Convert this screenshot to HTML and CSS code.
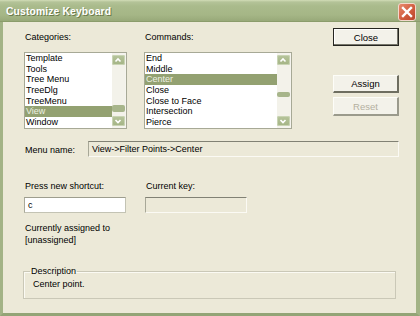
FILE: index.html
```html
<!DOCTYPE html>
<html>
<head>
<meta charset="utf-8">
<link rel="stylesheet" href="styles.css">
</head>
<body>
<div class="window">
  <div class="titlebar">
    <span class="title">Customize Keyboard</span>
    <span class="xbtn"><svg width="16" height="16" viewBox="0 0 16 16"><path d="M4 4 L12 12 M12 4 L4 12" stroke="#fff" stroke-width="2.4" stroke-linecap="square"/></svg></span>
  </div>
  <div class="frame">
    <div class="top">
      <div class="col col-cat">
        <div class="lbl">Categories:</div>
        <div class="listbox">
          <div class="items">
            <div class="item">Template</div>
            <div class="item">Tools</div>
            <div class="item">Tree Menu</div>
            <div class="item">TreeDlg</div>
            <div class="item">TreeMenu</div>
            <div class="item sel">View</div>
            <div class="item">Window</div>
          </div>
          <div class="sb">
            <div class="arr"><svg width="12" height="10" viewBox="0 0 12 10"><path d="M3.5 6.5 L6 4 L8.5 6.5" fill="none" stroke="#fff" stroke-width="1.6"/></svg></div>
            <div class="track"><div class="thumb thumb-cat"></div></div>
            <div class="arr"><svg width="12" height="10" viewBox="0 0 12 10"><path d="M3.5 4 L6 6.5 L8.5 4" fill="none" stroke="#fff" stroke-width="1.6"/></svg></div>
          </div>
        </div>
      </div>
      <div class="col col-cmd">
        <div class="lbl">Commands:</div>
        <div class="listbox">
          <div class="items">
            <div class="item">End</div>
            <div class="item">Middle</div>
            <div class="item sel">Center</div>
            <div class="item">Close</div>
            <div class="item">Close to Face</div>
            <div class="item">Intersection</div>
            <div class="item">Pierce</div>
          </div>
          <div class="sb">
            <div class="arr"><svg width="12" height="10" viewBox="0 0 12 10"><path d="M3.5 6.5 L6 4 L8.5 6.5" fill="none" stroke="#fff" stroke-width="1.6"/></svg></div>
            <div class="track"><div class="thumb thumb-cmd"></div></div>
            <div class="arr"><svg width="12" height="10" viewBox="0 0 12 10"><path d="M3.5 4 L6 6.5 L8.5 4" fill="none" stroke="#fff" stroke-width="1.6"/></svg></div>
          </div>
        </div>
      </div>
      <div class="buttons">
        <div class="btn btn-default">Close</div>
        <div class="btn btn-assign">Assign</div>
        <div class="btn btn-disabled">Reset</div>
      </div>
    </div>
    <div class="menu-row">
      <div class="menu-lbl">Menu name:</div>
      <div class="field field-menu">View-&gt;Filter Points-&gt;Center</div>
    </div>
    <div class="shortcut-row">
      <div class="sc-col sc-new">
        <div class="lbl2">Press new shortcut:</div>
        <div class="input">c</div>
      </div>
      <div class="sc-col">
        <div class="lbl2">Current key:</div>
        <div class="field field-key"></div>
      </div>
    </div>
    <div class="assigned">
      <div>Currently assigned to</div>
      <div>[unassigned]</div>
    </div>
    <fieldset class="group">
      <legend>Description</legend>
      <div class="desc">Center point.</div>
    </fieldset>
  </div>
</div>
</body>
</html>
```
FILE: styles.css
```css
html, body {
  margin: 0;
  padding: 0;
  background: #ece9d8;
}
body {
  font-family: "Liberation Sans", Arial, sans-serif;
  font-size: 9px;
  color: #000;
}
.window {
  width: 420px;
  height: 316px;
  display: flex;
  flex-direction: column;
  overflow: hidden;
}
.titlebar {
  height: 21px;
  flex: none;
  display: flex;
  align-items: center;
  justify-content: space-between;
  padding: 0 4px 0 6px;
  background: linear-gradient(#d2ddb7 0, #b4c398 2px, #aabb8c 6px, #a5b686 15px, #98a979 21px);
  border-bottom: 1px solid #8b9c6b;
}
.title {
  color: #fff;
  font-weight: bold;
  font-size: 10.4px;
  letter-spacing: 0.1px;
  text-shadow: 1px 1px 0 #6b7b4d;
  padding-top: 1px;
}
.xbtn {
  width: 18px;
  height: 18px;
  box-sizing: border-box;
  border: 1px solid #f3d8cc;
  border-radius: 3px;
  background: linear-gradient(135deg, #e88a6c, #cf5a3c 60%, #b9452c);
  display: flex;
  align-items: center;
  justify-content: center;
  margin-top: 2px;
}
.frame {
  flex: 1;
  background: #ece9d8;
  border-left: 3px solid #a3b386;
  border-right: 4px solid #a3b386;
  border-bottom: 3px solid #93a476;
  padding: 6px 17px 0 21px;
}
.top {
  display: flex;
  align-items: flex-start;
}
.col-cat { width: 103px; }
.col-cmd { width: 148px; margin-left: 17px; }
.lbl {
  height: 13px;
  line-height: 13px;
  margin-top: 3px;
  margin-bottom: 8px;
  padding-left: 1px;
}
.listbox {
  height: 77px;
  box-sizing: border-box;
  border: 1px solid #a7a996;
  background: #fff;
  display: flex;
}
.items {
  flex: 1;
  min-width: 0;
}
.item {
  height: 10.7px;
  line-height: 10.7px;
  padding-left: 1px;
  white-space: nowrap;
}
.item.sel {
  background: #93a171;
  color: #eef1e2;
}
.sb {
  width: 13px;
  padding: 2px 1px 2px 0;
  display: flex;
  flex-direction: column;
  background: #f5f4ee;
}
.arr {
  height: 10px;
  border-radius: 2px;
  background: linear-gradient(#b7c59c, #a3b384);
  box-shadow: inset 0 0 0 1px #c9d4b4;
}
.arr svg { display: block; }
.track {
  flex: 1;
  background: #f3f2ea;
}
.thumb {
  height: 6px;
  border-radius: 2px;
  background: #a7b58b;
}
.thumb-cat { margin-top: 40px; height: 7px; }
.thumb-cmd { margin-top: 27px; height: 5px; }
.buttons {
  margin-left: auto;
  width: 66px;
  display: flex;
  flex-direction: column;
}
.btn {
  height: 18px;
  box-sizing: border-box;
  display: flex;
  align-items: center;
  justify-content: center;
  background: #f3f2ea;
  border-top: 1px solid #fdfdf8;
  border-left: 1px solid #fdfdf8;
  border-right: 2px solid #6e6e60;
  border-bottom: 2px solid #6e6e60;
  font-size: 9.5px;
}
.btn-default {
  border: 1px solid #252520;
  box-shadow: inset -1px -1px 0 #76766a, inset 1px 1px 0 #fff;
}
.btn-assign { margin-top: 29px; }
.btn-disabled {
  margin-top: 4px;
  height: 19px;
  color: #b3b09f;
  border-right-color: #9a9a8c;
  border-bottom-color: #9a9a8c;
}
.menu-row {
  display: flex;
  align-items: center;
  margin-top: 12px;
}
.menu-lbl {
  width: 64px;
  padding-left: 1px;
  box-sizing: border-box;
  line-height: 13px;
  padding-top: 2px;
}
.field {
  box-sizing: border-box;
  height: 16px;
  line-height: 14px;
  padding-left: 3px;
  border-top: 1px solid #818174;
  border-left: 1px solid #a8a898;
  border-right: 1px solid #fbfaf4;
  border-bottom: 1px solid #fbfaf4;
  background: #ece9d8;
}
.field-menu { width: 311px; }
.field-key { width: 102px; }
.shortcut-row {
  display: flex;
  margin-top: 23px;
}
.sc-new { width: 121px; }
.lbl2 {
  line-height: 13px;
  height: 13px;
  margin-bottom: 4px;
  padding-left: 1px;
}
.input {
  width: 102px;
  height: 16px;
  box-sizing: border-box;
  line-height: 14px;
  padding-left: 3px;
  background: #fff;
  border: 1px solid #c3c3b4;
  border-top-color: #9d9d8e;
  border-left-color: #a9a99a;
}
.assigned {
  margin-top: 9px;
  line-height: 12px;
  padding-left: 1px;
}
.group {
  margin: 19px 0 0 -1px;
  width: 373px;
  box-sizing: border-box;
  padding: 0 0 8px 6px;
  border: 1px solid #cac8b7;
  box-shadow: inset 1px 1px 0 #fbfaf3;
  min-width: 0;
}
.group legend {
  padding: 0 1px;
  line-height: 12px;
}
.desc {
  line-height: 12px;
  padding-top: 1px;
  padding-left: 3px;
}
```
